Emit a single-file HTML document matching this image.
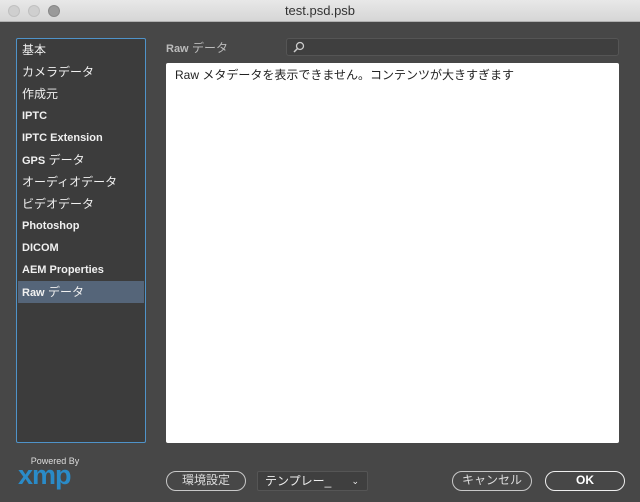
<!DOCTYPE html><html><head><meta charset="utf-8"><style>
*{margin:0;padding:0;box-sizing:border-box}
body{width:640px;height:502px;background:#474747;font-family:"Liberation Sans","Noto Sans CJK JP",sans-serif;position:relative;overflow:hidden;color:#eee}
.tb{position:absolute;left:0;top:0;width:640px;height:22px;background:linear-gradient(#e8e8e8,#d6d6d6);border-bottom:1px solid #b0b0b0;text-align:center;font-size:13px;line-height:22px;color:#333}
.dot{position:absolute;top:5px;width:12px;height:12px;border-radius:50%;background:#cfcfcf;border:1px solid #c0c0c0}
.side{position:absolute;left:16px;top:38px;width:130px;height:405px;background:#3c3c3c;border:1px solid #4f93c9;border-radius:2px}
.it{position:absolute;left:5px;font-size:12px;color:#f0f0f0;height:22px;line-height:22px}
.b{font-weight:bold;font-size:11px}
.sel{position:absolute;left:1px;top:242px;width:126px;height:22px;background:#556579}
.white{position:absolute;left:166px;top:63px;width:453px;height:380px;background:#fff;border-radius:2px;color:#222;font-size:12px;padding:3px 9px}
.btn{position:absolute;top:471px;height:20px;border:1.5px solid #c8c8c8;border-radius:10px;font-size:12px;line-height:17px;text-align:center;color:#ddd}
</style></head><body>
<div class="tb">test.psd.psb
<div class="dot" style="left:8px"></div><div class="dot" style="left:28px"></div><div class="dot" style="left:48px;background:#9a9a9a;border-color:#888"></div></div>
<div class="side">
<div class="sel"></div>
<div class="it" style="top:0">基本</div>
<div class="it" style="top:22px">カメラデータ</div>
<div class="it" style="top:44px">作成元</div>
<div class="it b" style="top:66px">IPTC</div>
<div class="it b" style="top:88px">IPTC Extension</div>
<div class="it" style="top:110px"><b style="font-size:11px">GPS</b> データ</div>
<div class="it" style="top:132px">オーディオデータ</div>
<div class="it" style="top:154px">ビデオデータ</div>
<div class="it b" style="top:176px">Photoshop</div>
<div class="it b" style="top:198px">DICOM</div>
<div class="it b" style="top:220px">AEM Properties</div>
<div class="it" style="top:242px"><b style="font-size:11px">Raw</b> データ</div>
</div>
<div style="position:absolute;left:166px;top:39px;font-size:12px;color:#bbb"><b style="font-size:11px">Raw</b> データ</div>
<div style="position:absolute;left:286px;top:38px;width:333px;height:18px;background:#3f3f3f;border:1px solid #555;border-radius:3px">
<svg width="14" height="14" style="position:absolute;left:5px;top:1px"><circle cx="8" cy="6" r="3.5" fill="none" stroke="#ccc" stroke-width="1.3"/><line x1="5.5" y1="8.5" x2="2" y2="12" stroke="#ccc" stroke-width="1.5"/></svg></div>
<div class="white">Raw メタデータを表示できません。コンテンツが大きすぎます</div>
<div style="position:absolute;left:22px;top:456px;width:66px;text-align:center;font-size:9px;color:#ddd">Powered By</div>
<div style="position:absolute;left:18px;top:460px;width:70px;font-size:27px;font-weight:bold;color:#2a8bc8;letter-spacing:-1px">xmp</div>
<div class="btn" style="left:166px;width:80px;line-height:16px">環境設定</div>
<div style="position:absolute;left:257px;top:471px;width:111px;height:20px;background:#3f3f3f;border:1px solid #555;border-radius:2px;font-size:12px;line-height:18px;padding-left:7px;color:#eee">テンプレー_<span style="position:absolute;right:8px;font-size:9px">⌄</span></div>
<div class="btn" style="left:452px;width:80px;line-height:16px">キャンセル</div>
<div class="btn" style="left:545px;width:80px;font-weight:bold;color:#fff;border-color:#eee;line-height:16px">OK</div>
</body></html>
